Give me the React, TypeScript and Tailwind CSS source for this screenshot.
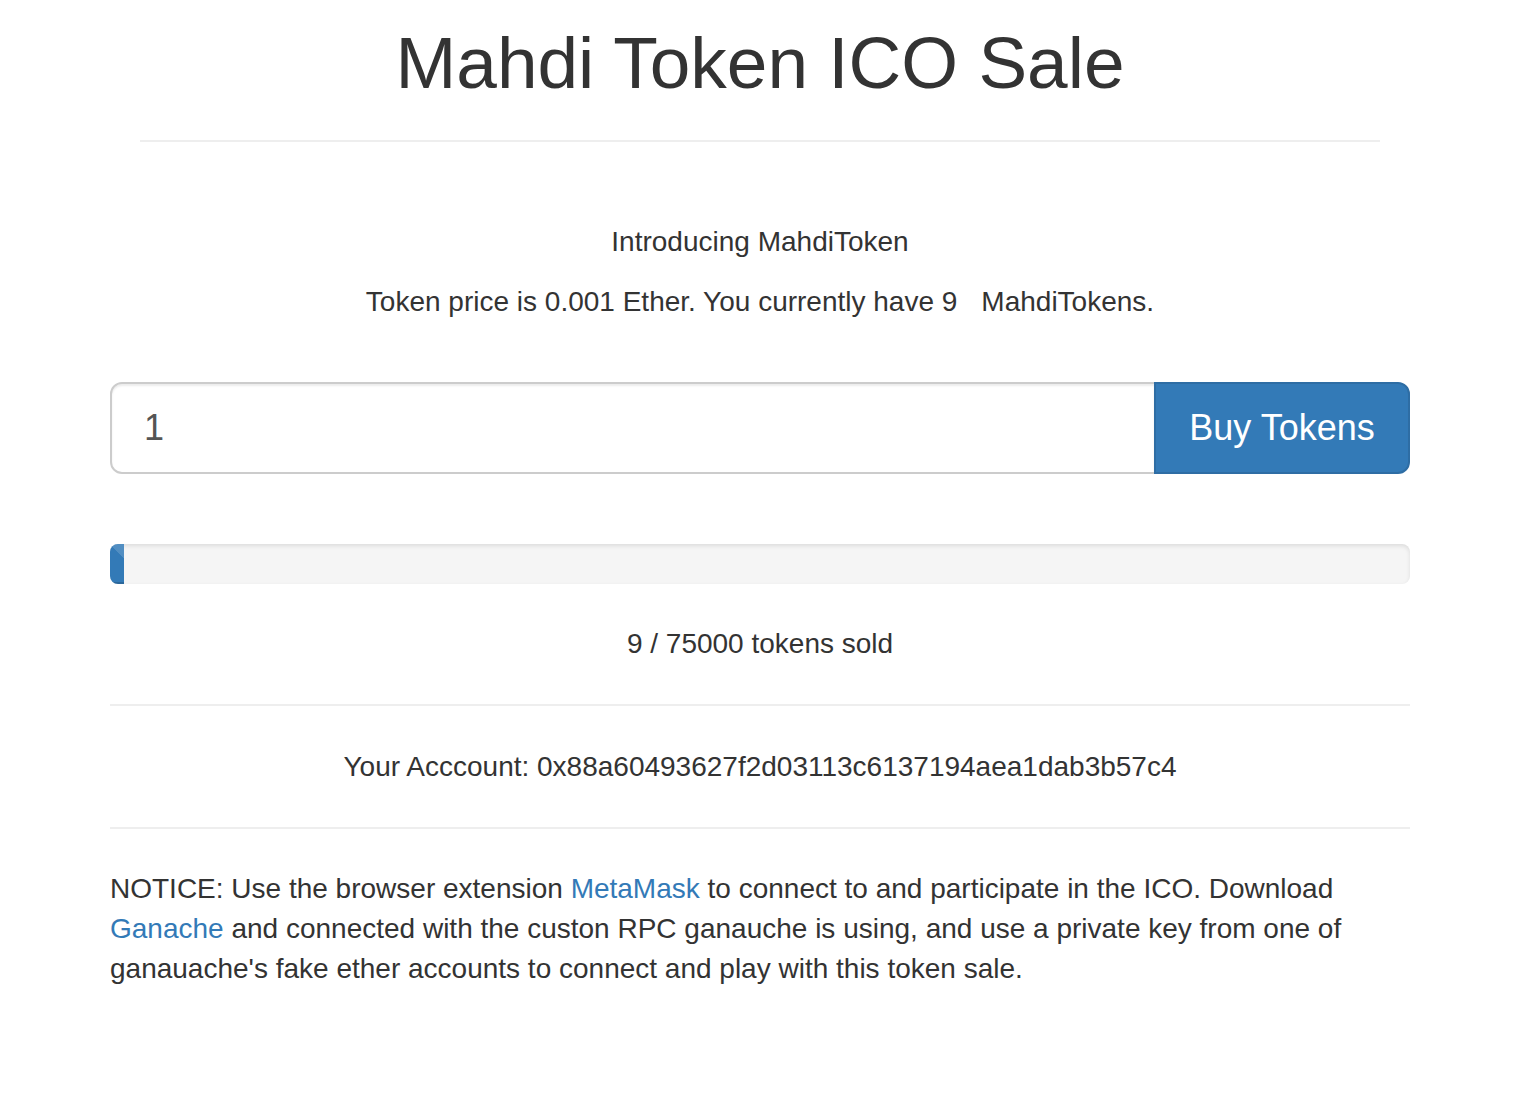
import React from "react";

const App = () => {
  const sold = 9;
  const total = 75000;
  return (
    <div className="min-h-screen bg-white font-['Liberation_Sans',Arial,sans-serif] text-[#333] text-[28px] leading-[40px]">
      <div className="flex justify-center pl-[4px]">
        <div className="w-[1300px]">
          <div className="mx-[30px] border-b-2 border-[#eee] pt-[23px] pb-[38px]">
            <h1 className="text-center text-[73px] leading-[79px] font-medium">Mahdi Token ICO Sale</h1>
          </div>

          <div className="mt-[80px] text-center">
            <p className="mb-[20px]">Introducing MahdiToken</p>
            <p className="mb-[20px]">
              Token price is 0.001 Ether. You currently have {sold}
              <span className="inline-block w-[24px]"></span>
              MahdiTokens.
            </p>
          </div>

          <div className="mt-[60px] flex h-[92px]">
            <input
              type="number"
              defaultValue={1}
              className="flex-1 min-w-0 rounded-l-[12px] border-2 border-[#ccc] px-[32px] text-[36px] text-[#555] shadow-[inset_0_2px_2px_rgba(0,0,0,0.075)] outline-none"
            />
            <button className="w-[256px] -ml-[2px] rounded-r-[12px] border-2 border-[#2e6da4] bg-[#337ab7] text-[36px] text-white">
              Buy Tokens
            </button>
          </div>

          <div className="mt-[70px] h-[40px] overflow-hidden rounded-[8px] bg-[#f5f5f5] shadow-[inset_0_2px_4px_rgba(0,0,0,0.1)]">
            <div
              className="h-full min-w-[14px] bg-[#337ab7] bg-[linear-gradient(45deg,rgba(255,255,255,0.15)_25%,transparent_25%,transparent_50%,rgba(255,255,255,0.15)_50%,rgba(255,255,255,0.15)_75%,transparent_75%,transparent)] bg-size-[80px_80px] shadow-[inset_0_-2px_0_rgba(0,0,0,0.15)]"
              style={{ width: `${(sold / total) * 100}%` }}
            ></div>
          </div>

          <p className="mt-[40px] text-center">
            {sold} / {total} tokens sold
          </p>

          <hr className="mt-[40px] border-t-2 border-[#eee]" />

          <p className="mt-[41px] text-center">Your Acccount: 0x88a60493627f2d03113c6137194aea1dab3b57c4</p>

          <hr className="mt-[40px] border-t-2 border-[#eee]" />

          <p className="mt-[40px]">
            NOTICE: Use the browser extension{" "}
            <a href="#" className="text-[#337ab7]">MetaMask</a> to connect to and participate in the ICO. Download{" "}
            <a href="#" className="text-[#337ab7]">Ganache</a> and connected with the custon RPC ganauche is using, and
            use a private key from one of ganauache's fake ether accounts to connect and play with this token sale.
          </p>
        </div>
      </div>
    </div>
  );
};

export default App;
